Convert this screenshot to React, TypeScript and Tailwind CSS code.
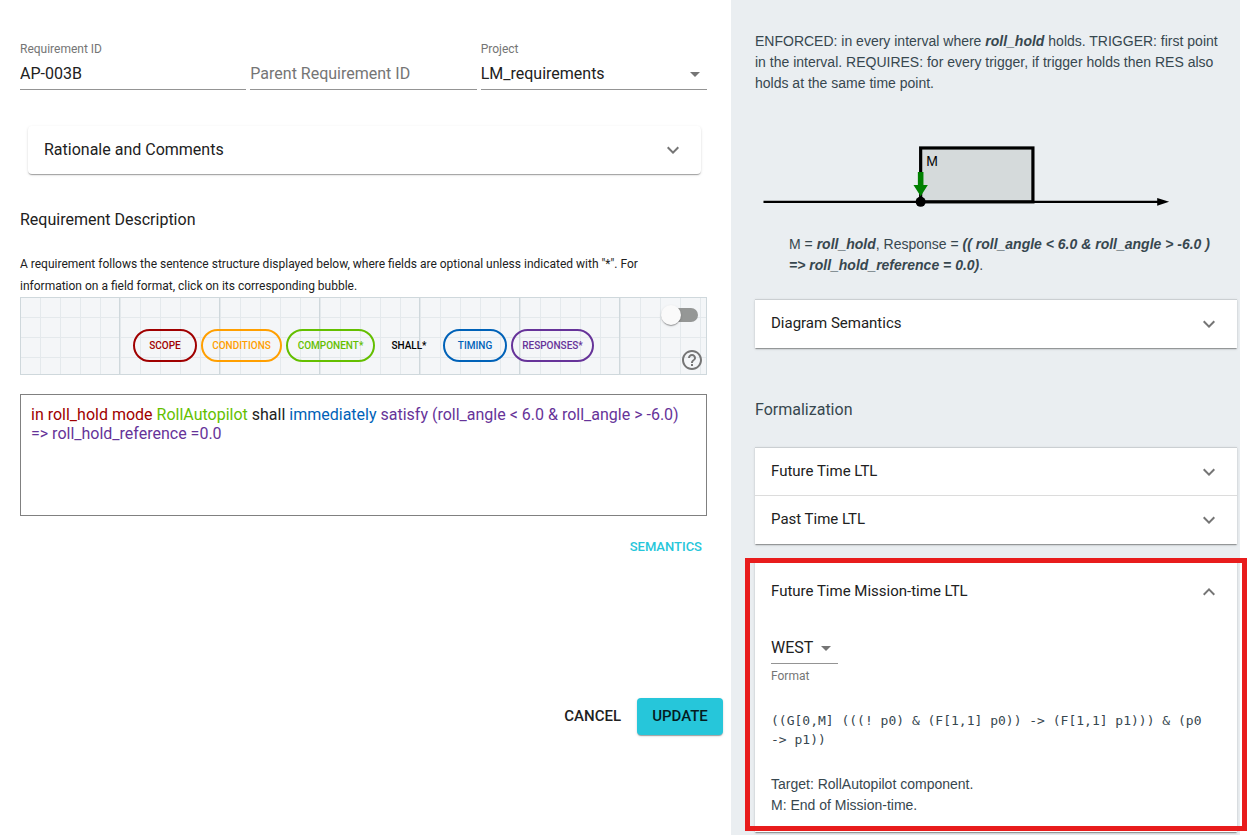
import React, { useState } from "react";

function Icon({ d, className = "" }: { d: string; className?: string }) {
  return (
    <svg viewBox="0 0 24 24" className={`size-6 shrink-0 fill-[#757575] ${className}`} aria-hidden="true">
      <path d={d} />
    </svg>
  );
}

const EXPAND_MORE = "M16.59 8.59L12 13.17 7.41 8.59 6 10l6 6 6-6z";
const ARROW_DOWN = "M7 10l5 5 5-5z";
const HELP =
  "M11 18h2v-2h-2v2zm1-16C6.48 2 2 6.48 2 12s4.48 10 10 10 10-4.48 10-10S17.52 2 12 2zm0 18c-4.41 0-8-3.59-8-8s3.59-8 8-8 8 3.59 8 8-3.59 8-8 8zm0-14c-2.21 0-4 1.79-4 4h2c0-1.1.9-2 2-2s2 .9 2 2c0 2-3 1.75-3 5h2c0-2.25 3-2.5 3-5 0-2.21-1.79-4-4-4z";

const CARD_SHADOW =
  "shadow-[0_2px_1px_-1px_rgba(0,0,0,0.2),0_1px_1px_0_rgba(0,0,0,0.14),0_1px_3px_0_rgba(0,0,0,0.12)]";

const fieldLabel = "block h-4 text-xs leading-[14px] text-[#757575]";
const fieldInput =
  "h-8 w-full border-b border-[#949494] bg-transparent text-base leading-5 text-[#212121] outline-none placeholder:text-[#757575]";

function Summary({
  title,
  open = false,
  size = "pb-0.5 text-[15px]",
}: {
  title: string;
  open?: boolean;
  size?: string;
}) {
  return (
    <button
      type="button"
      aria-expanded={open}
      className={`flex w-full items-center justify-between px-4 text-left text-[#212121] ${open ? "h-16" : "h-12"}`}
    >
      <span className={size}>{title}</span>
      <Icon d={EXPAND_MORE} className={open ? "rotate-180" : ""} />
    </button>
  );
}

const bubbles = [
  { label: "SCOPE", style: "min-w-16 border-[#a00000] text-[#a00000]" },
  { label: "CONDITIONS", style: "min-w-[81px] border-[#ff9f00] text-[#ff9f00]" },
  { label: "COMPONENT*", style: "min-w-[89px] border-[#64bf00] text-[#64bf00]" },
  { label: "SHALL*", style: "min-w-[60px] border-transparent text-black" },
  { label: "TIMING", style: "min-w-16 border-[#0062b8] text-[#0062b8]" },
  { label: "RESPONSES*", style: "min-w-[83px] border-[#663399] text-[#663399]" },
];

function SentenceStructure() {
  const [on, setOn] = useState(false);
  return (
    <div className="grid h-[78px] grid-cols-[1fr_auto_1fr] border border-[#cfd8dc] bg-[#f4f6f8] bg-[linear-gradient(#cfd8dc_1px,transparent_1px),linear-gradient(90deg,#cfd8dc_1px,transparent_1px),linear-gradient(#e4e9ec_1px,transparent_1px),linear-gradient(90deg,#e4e9ec_1px,transparent_1px)] bg-[size:100px_100px,100px_100px,20px_20px,20px_20px] bg-[position:-2px_-2px,-2px_-2px,-1px_-1px,-1px_-1px]">
      <div />
      <div className="flex items-center gap-1 pt-[18px]">
        {bubbles.map((b) => (
          <button
            key={b.label}
            type="button"
            className={`h-[33px] rounded-full border-2 text-[10px] font-medium ${b.style}`}
          >
            {b.label}
          </button>
        ))}
      </div>
      <div className="flex flex-col items-end justify-between pt-[7px]">
        <label className="mr-2 flex h-5 w-[37px] cursor-pointer items-center">
          <input
            type="checkbox"
            role="switch"
            aria-label="Toggle fields"
            checked={on}
            onChange={() => setOn(!on)}
            className="peer sr-only"
          />
          <span className="flex h-3.5 w-full items-center rounded-full bg-gradient-to-r from-transparent from-20% to-[#959796] to-20% peer-checked:justify-end">
            <span className="size-5 shrink-0 rounded-full bg-[#fafafa] shadow-[0_2px_1px_-1px_rgba(0,0,0,0.2),0_1px_1px_0_rgba(0,0,0,0.14),0_1px_3px_0_rgba(0,0,0,0.12)]" />
          </span>
        </label>
        <button type="button" aria-label="Help" className="mr-0.5 mb-0.5">
          <Icon d={HELP} />
        </button>
      </div>
    </div>
  );
}

function RequirementForm() {
  return (
    <main className="flex flex-col pt-[42px] pr-6 pl-5">
      <div className="grid grid-cols-3 gap-1">
        <div>
          <label htmlFor="req-id" className={fieldLabel}>Requirement ID</label>
          <input id="req-id" defaultValue="AP-003B" className={fieldInput} />
        </div>
        <div className="pt-4">
          <input aria-label="Parent Requirement ID" placeholder="Parent Requirement ID" className={fieldInput} />
        </div>
        <div>
          <label htmlFor="project" className={fieldLabel}>Project</label>
          <div className="relative">
            <select id="project" className={`appearance-none ${fieldInput}`}>
              <option>LM_requirements</option>
            </select>
            <Icon d={ARROW_DOWN} className="pointer-events-none absolute top-1 right-0" />
          </div>
        </div>
      </div>

      <div className={`mt-9 mr-1.5 ml-2 rounded bg-white ${CARD_SHADOW}`}>
        <Summary title="Rationale and Comments" size="text-base" />
      </div>

      <h2 className="mt-8 text-base leading-7 text-[#212121]">Requirement Description</h2>
      <p className="mt-[19px] pr-4 text-xs leading-[22px] text-[#212121]">
        A requirement follows the sentence structure displayed below, where fields are optional unless indicated with
        "*". For information on a field format, click on its corresponding bubble.
      </p>

      <SentenceStructure />

      <div
        role="textbox"
        aria-label="Requirement text"
        aria-multiline="true"
        contentEditable
        suppressContentEditableWarning
        className="mt-[19px] min-h-[122px] border border-[#808080] p-2.5 text-base leading-[19px] text-[#212121] outline-none"
      >
        <span className="text-[#a00000]">in roll_hold mode</span> <span className="text-[#64bf00]">RollAutopilot</span>{" "}
        <span>shall</span> <span className="text-[#0062b8]">immediately</span>{" "}
        <span className="text-[#663399]">satisfy (roll_angle &lt; 6.0 &amp; roll_angle &gt; -6.0)</span>{" "}
        <span className="text-[#663399]">=&gt; roll_hold_reference =0.0</span>
      </div>

      <button type="button" className="mt-4 h-[30px] self-end px-[5px] text-[13px] font-medium text-[#26c6da]">
        SEMANTICS
      </button>

      <div className="mt-[136px] -mr-4 flex items-center justify-end gap-2">
        <button type="button" className="h-[37px] px-2 text-[15px] font-medium text-[#212121]">
          CANCEL
        </button>
        <button
          type="button"
          className={`h-[37px] min-w-[86px] rounded bg-[#26c6da] px-3 text-[15px] font-medium text-[#051c1f] ${CARD_SHADOW}`}
        >
          UPDATE
        </button>
      </div>
    </main>
  );
}

function TimelineDiagram() {
  return (
    <svg
      viewBox="0 0 483 80"
      className="mt-10 h-20 w-full"
      preserveAspectRatio="xMinYMin meet"
      role="img"
      aria-label="Timeline with mode M"
    >
      <rect x="166" y="14" width="112.500" height="54" fill="#d5dadb" stroke="#000" strokeWidth="3.200" />
      <path d="M8.500 68H405" stroke="#000" strokeWidth="2.4" />
      <path d="M403 64.2L415 68L403 71.800z" fill="#000" />
      <path d="M163.200 38h5.600v13.200h4.400L166 62.500L158.800 51.200h4.400z" fill="#008000" />
      <circle cx="166" cy="68" r="5" />
      <text x="171.500" y="32" fontSize="14" fontFamily="Liberation Sans, sans-serif">M</text>
    </svg>
  );
}

function SemanticsPanel() {
  return (
    <aside className="bg-[#eaeef1] pt-[31px] pr-[3px] pb-[3px] pl-6 text-[#37474f]">
      <p className="pr-2 font-['Liberation_Sans',sans-serif] text-sm leading-[21px]">
        ENFORCED: in every interval where <b><i>roll_hold</i></b> holds. TRIGGER: first point in the interval.
        REQUIRES: for every trigger, if trigger holds then RES also holds at the same time point.
      </p>
      <TimelineDiagram />
      <p className="mt-5 pr-4 pl-[34px] font-['Liberation_Sans',sans-serif] text-sm leading-[21px]">
        M = <b><i>roll_hold</i></b>, Response ={" "}
        <b><i>(( roll_angle &lt; 6.0 &amp; roll_angle &gt; -6.0 ) =&gt; roll_hold_reference = 0.0)</i></b>.
      </p>

      <div className={`mt-[23px] border-t border-[#cbcfd2] bg-white ${CARD_SHADOW}`}>
        <Summary title="Diagram Semantics" />
      </div>

      <h2 className="mt-12 text-base leading-7">Formalization</h2>

      <div className={`mt-[23px] border-t border-[#cbcfd2] bg-white ${CARD_SHADOW}`}>
        <Summary title="Future Time LTL" />
        <div className="-mt-px border-t border-[#dcdcdc]">
          <Summary title="Past Time LTL" />
        </div>
      </div>

      <div className={`relative mt-4 bg-white ${CARD_SHADOW}`}>
        <Summary title="Future Time Mission-time LTL" open />
        <div className="px-4 pt-2 pb-4">
          <div className="relative w-[67px]">
            <select id="format" className={`appearance-none ${fieldInput}`}>
              <option>WEST</option>
            </select>
            <Icon d={ARROW_DOWN} className="pointer-events-none absolute top-1 right-0" />
          </div>
          <label htmlFor="format" className="mt-1 block text-xs leading-4 text-[#757575]">Format</label>
          <pre className="mt-[27px] pr-2 font-['DejaVu_Sans_Mono',monospace] text-[13px] leading-[19px] whitespace-pre-wrap">
            {"((G[0,M] (((! p0) & (F[1,1] p0)) -> (F[1,1] p1))) & (p0 -> p1))"}
          </pre>
          <p className="mt-[25px] font-['Liberation_Sans',sans-serif] text-sm leading-[21px]">
            Target: RollAutopilot component.
            <br />
            M: End of Mission-time.
          </p>
        </div>
        <div className="pointer-events-none absolute -top-0.5 -right-2.5 bottom-px -left-2.5 border-[5px] border-[#e81c1c]" />
      </div>
    </aside>
  );
}

export default function App() {
  return (
    <div className="grid min-h-screen grid-cols-[731fr_509fr] bg-white pr-2 font-[Roboto,sans-serif]">
      <RequirementForm />
      <SemanticsPanel />
    </div>
  );
}
